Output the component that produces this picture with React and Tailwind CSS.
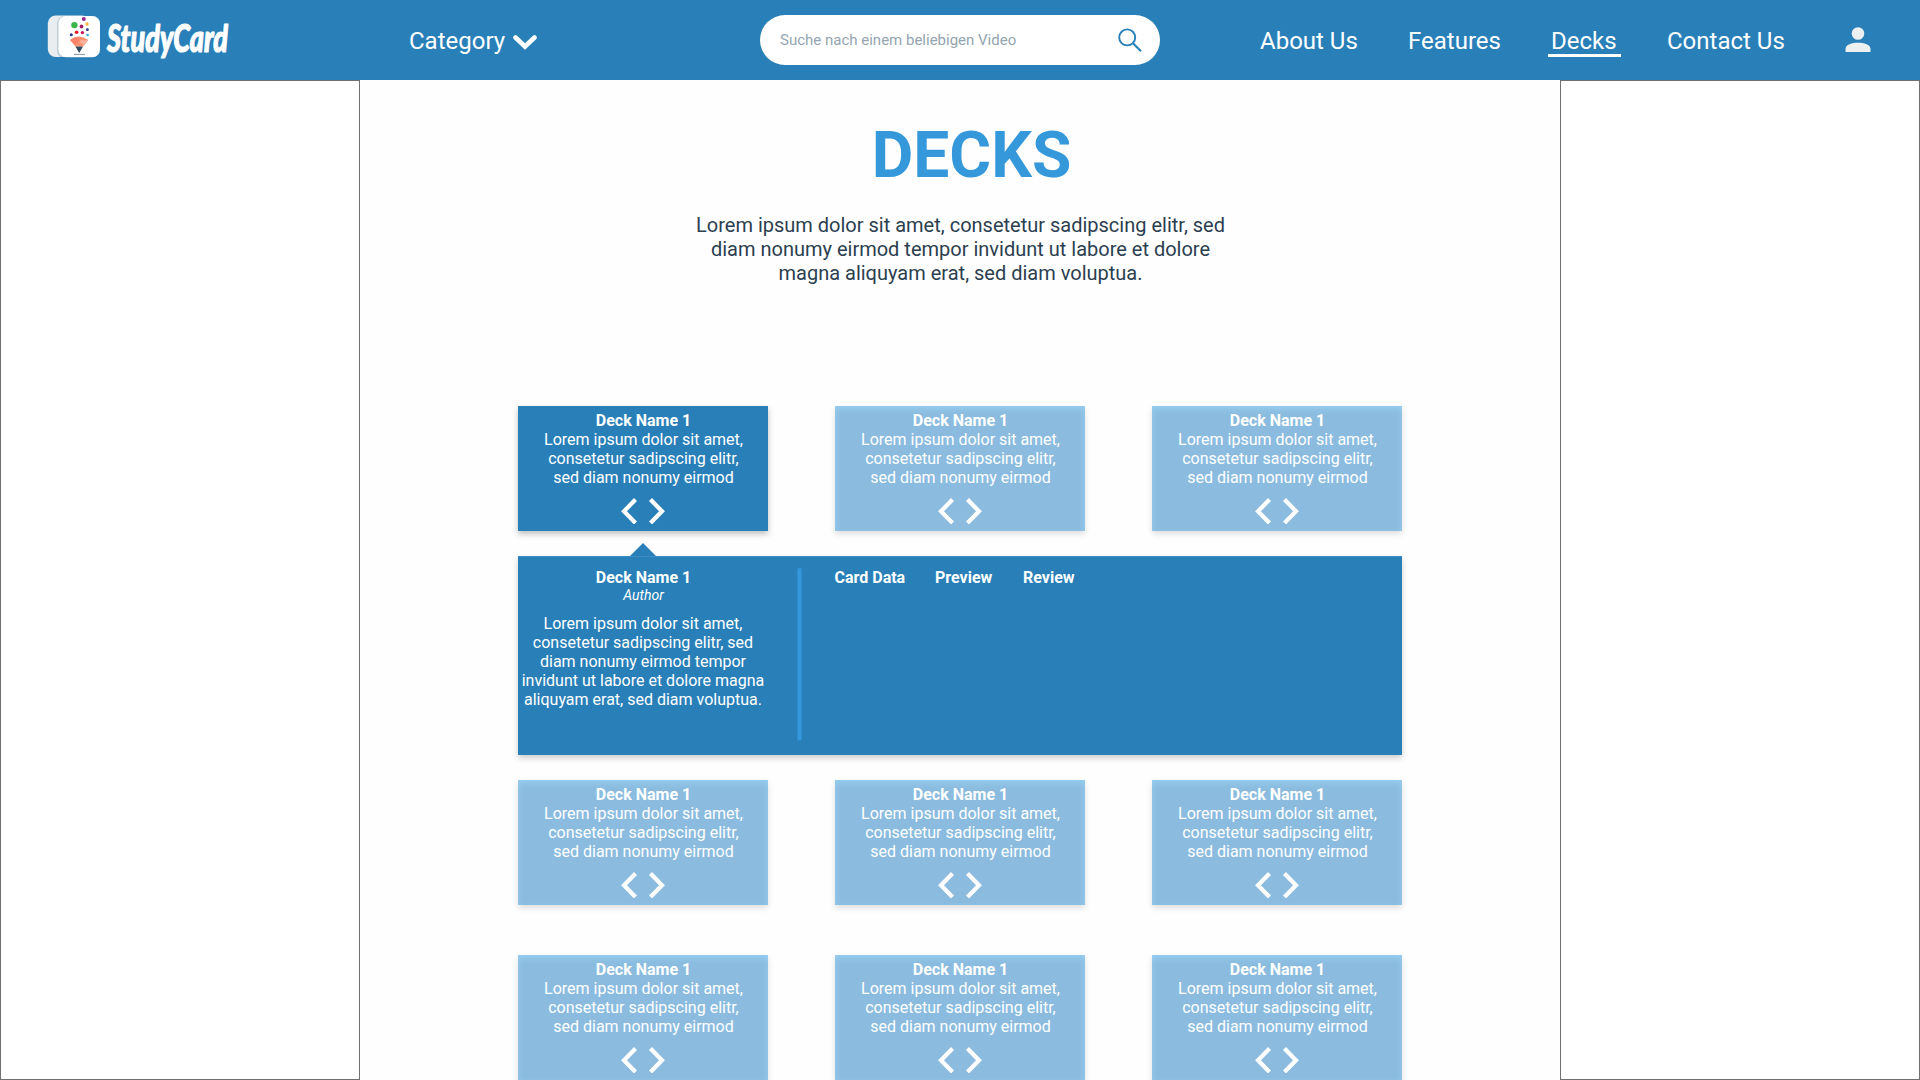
import React from "react";

const CARD_LINES = ["Lorem ipsum dolor sit amet,", "consetetur sadipscing elitr,", "sed diam nonumy eirmod"];
const HERO_LINES = [
  "Lorem ipsum dolor sit amet, consetetur sadipscing elitr, sed",
  "diam nonumy eirmod tempor invidunt ut labore et dolore",
  "magna aliquyam erat, sed diam voluptua.",
];
const DETAIL_LINES = [
  "Lorem ipsum dolor sit amet,",
  "consetetur sadipscing elitr, sed",
  "diam nonumy eirmod tempor",
  "invidunt ut labore et dolore magna",
  "aliquyam erat, sed diam voluptua.",
];

function Lines({ lines }) {
  return lines.map((line) => (
    <span key={line} className="block whitespace-nowrap">{line}</span>
  ));
}

function Logo() {
  return (
    <svg width="200" height="72" viewBox="0 0 200 72" className="block shrink-0 overflow-visible" aria-label="StudyCard">
      <rect x="0.8" y="7.5" width="42" height="41.5" rx="8" fill="#e9edef" />
      <rect x="10" y="8" width="43" height="42.5" rx="8" fill="#1f5f8b" opacity="0.22" />
      <rect x="11.5" y="8" width="41.5" height="41.3" rx="7.5" fill="#fff" />
      <g>
        <circle cx="36.8" cy="10.9" r="2" fill="#93278f" />
        <circle cx="27.4" cy="17.1" r="3.2" fill="#39b54a" />
        <circle cx="34.5" cy="18.5" r="1.9" fill="#9e1f63" />
        <circle cx="40" cy="16" r="1.7" fill="#fbb040" />
        <circle cx="40.4" cy="21.7" r="1.4" fill="#2e3192" />
        <circle cx="29.6" cy="24.3" r="1.8" fill="#ed1c24" />
        <circle cx="35.4" cy="24.6" r="1.7" fill="#d4145a" />
        <circle cx="24.3" cy="26.8" r="1.5" fill="#2e3192" />
        <circle cx="40.6" cy="27" r="1.3" fill="#29abe2" />
      </g>
      <path d="M23 32 Q32 25 41.3 32 L36 38.5 H28.4Z" fill="#fc9272" />
      <path d="M23 32 Q27 29 30 28.8 L33 33 L28 36.5Z" fill="#fb8168" />
      <path d="M32 32.5 L41 32 L36.5 37.5Z" fill="#fdb39b" />
      <path d="M28.4 38.5 H36 L32.2 45Z" fill="#34495e" />
      <rect x="27" y="45.9" width="11" height="0.8" fill="#66788a" />
      <text x="60" y="43.5" textLength="121" lengthAdjust="spacingAndGlyphs" fill="#fff" stroke="#fff" strokeWidth="1.2"
        strokeLinejoin="round" className="font-['Lato',sans-serif] text-[38px] font-black italic">StudyCard</text>
    </svg>
  );
}

function Header() {
  return (
    <header className="flex h-20 items-center bg-[#2980b9] text-2xl text-white">
      <div className="h-16 w-[362px] shrink-0 pl-[47px]"><Logo /></div>
      <div className="flex w-[398px] shrink-0 items-center pl-[47px]">
        <span className="mt-0.5 leading-7">Category</span>
        <svg width="24" height="16" viewBox="0 0 24 16" className="ml-2 mt-1.5" fill="none">
          <path d="M2.5 2.5 L12 11.5 L21.5 2.5" stroke="#fff" strokeWidth="4.6" strokeLinecap="round" />
        </svg>
      </div>
      <div className="flex h-[50px] w-[400px] shrink-0 items-center justify-between rounded-full bg-white pl-5 pr-[18px]">
        <span className="mt-0.5 text-[15px] text-[#95a5b1]">Suche nach einem beliebigen Video</span>
        <svg width="24" height="24" viewBox="0 0 24 24" fill="none" stroke="#2980b9" strokeWidth="1.9">
          <circle cx="9.2" cy="9.4" r="8" />
          <path d="M15 15.2 L23 23.2" strokeWidth="2.2" />
        </svg>
      </div>
      <nav className="ml-[100px] mt-0.5 flex shrink-0 leading-7">
        <span className="w-[148px]">About Us</span>
        <span className="w-[143px]">Features</span>
        <span className="relative w-[116px]">
          Decks
          <span className="absolute -left-[3px] top-[27px] h-[3px] w-[73px] bg-white" />
        </span>
        <span>Contact Us</span>
      </nav>
      <svg width="26" height="26" viewBox="0 0 26 26" className="ml-auto mr-[49px]" fill="#ecf0f1">
        <ellipse cx="13" cy="6.5" rx="6.3" ry="6.3" />
        <path d="M0.5 25 V22 C0.5 17.5 7 15.8 13 15.8 S25.5 17.5 25.5 22 V25Z" />
      </svg>
    </header>
  );
}

function DeckCard({ active }) {
  return (
    <article className={
      "flex h-[125px] w-[250px] flex-col items-center pt-[5px] text-center text-base leading-[19px] text-white " +
      (active
        ? "bg-[#2980b9] shadow-[0_3px_6px_rgba(0,0,0,0.25)]"
        : "bg-[#8bbcdf] shadow-[0_3px_6px_rgba(0,0,0,0.13),inset_0_3px_6px_rgba(152,208,242,0.95)]")
    }>
      <h3 className="pl-px font-bold">Deck Name 1</h3>
      <p className="pl-px"><Lines lines={CARD_LINES} /></p>
      <svg width="44" height="26" viewBox="0 0 44 26" className="mt-[11px]" fill="none" stroke="#fff" strokeWidth="4.2">
        <path d="M14.5 1.5 L3 13.3 L14.5 25" />
        <path d="M29.5 1.5 L41 13.3 L29.5 25" />
      </svg>
    </article>
  );
}

function DeckRow({ activeIndex = -1 }) {
  return (
    <div className="flex justify-between">
      {[0, 1, 2].map((i) => <DeckCard key={i} active={i === activeIndex} />)}
    </div>
  );
}

function DeckDetail() {
  return (
    <section className="relative mt-[25px] flex h-[199px] bg-[#2980b9] text-base leading-[19px] text-white shadow-[0_3px_6px_rgba(0,0,0,0.2),inset_0_1px_0_#3f8ec3]">
      <svg width="26" height="13" viewBox="0 0 26 13" className="absolute -top-[13px] left-[112px]">
        <path d="M0 13 L13 0 L26 13Z" fill="#2980b9" />
      </svg>
      <div className="w-[250px] pt-3 text-center">
        <h3 className="pl-px font-bold">Deck Name 1</h3>
        <p className="pl-px text-sm leading-[17px] italic">Author</p>
        <p className="mt-2.5"><Lines lines={DETAIL_LINES} /></p>
      </div>
      <svg width="5" height="173" viewBox="0 0 5 173" className="ml-[29px] mt-3">
        <rect x="0.5" y="0.3" width="4" height="172" fill="#3498db" />
      </svg>
      <div className="ml-[32.5px] flex pt-3 font-bold">
        <span className="w-[100.5px]">Card Data</span>
        <span className="w-[88px]">Preview</span>
        <span>Review</span>
      </div>
    </section>
  );
}

export default function App() {
  return (
    <div className="flex h-[1080px] w-[1920px] flex-col overflow-hidden bg-white font-['Roboto',sans-serif]">
      <Header />
      <div className="flex h-[1000px]">
        <aside className="w-[360px] shrink-0 border border-[#707070] bg-white" />
        <main className="w-[1200px] shrink-0 overflow-hidden bg-[#fefefe] pl-[158px] pr-[158px]">
          <h1 className="h-[125px] pl-[23px] pt-[38px] text-center text-[64px] leading-[75px] font-bold text-[#3498db]">DECKS</h1>
          <p className="mt-2 pl-px text-center text-xl leading-6 text-[#2c3e50]"><Lines lines={HERO_LINES} /></p>
          <div className="mt-[121px]">
            <DeckRow activeIndex={0} />
            <DeckDetail />
            <div className="mt-[25px]"><DeckRow /></div>
            <div className="mt-[50px]"><DeckRow /></div>
          </div>
        </main>
        <aside className="w-[360px] shrink-0 border border-[#707070] bg-white" />
      </div>
    </div>
  );
}
